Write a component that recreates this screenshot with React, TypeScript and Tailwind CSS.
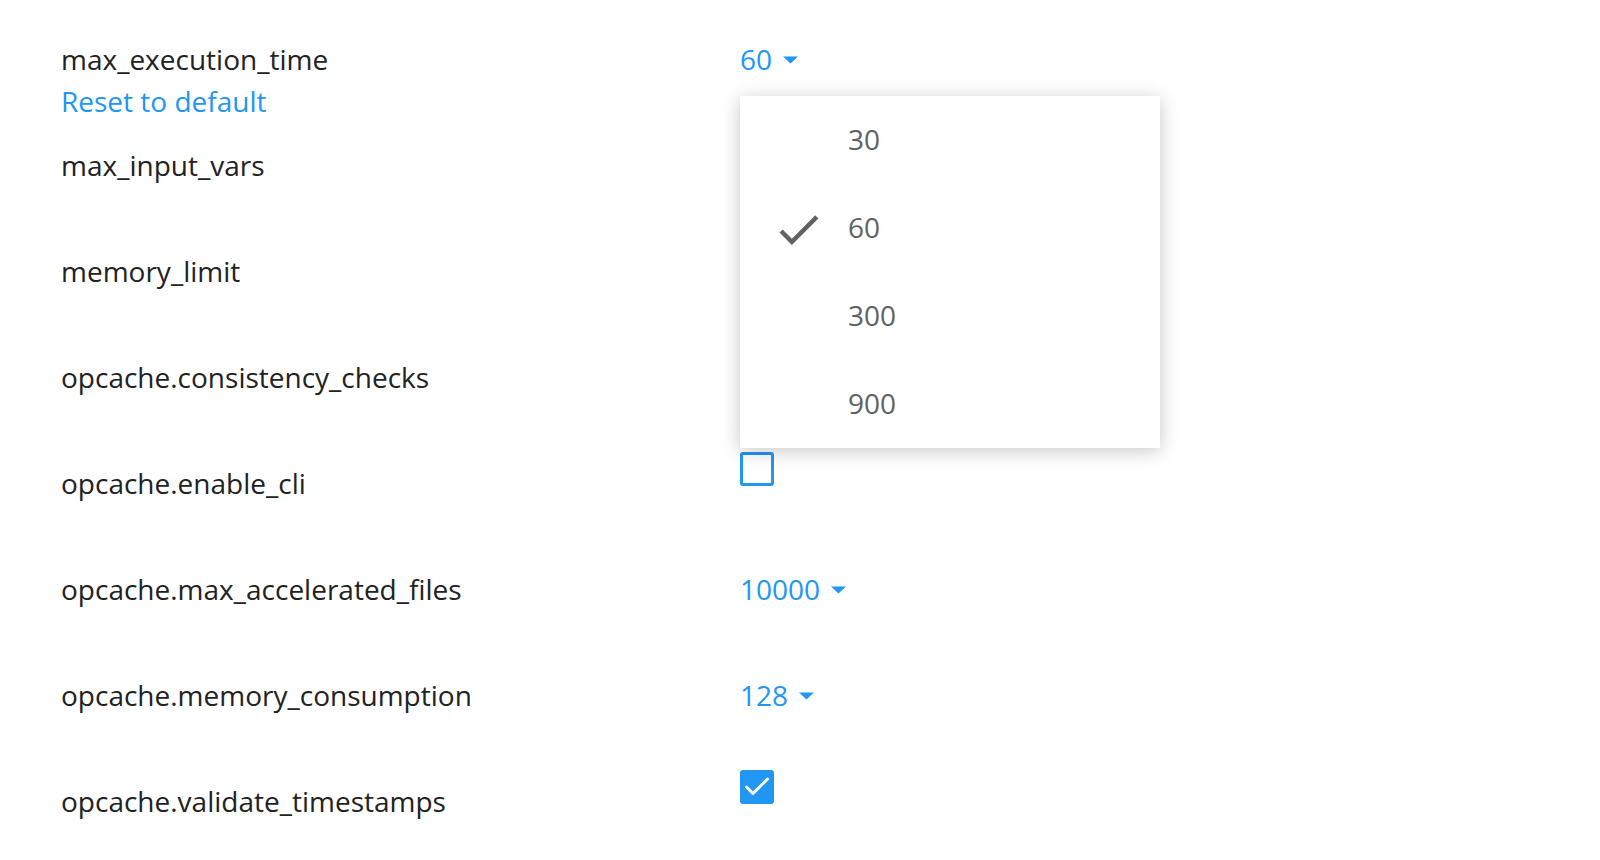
import { useState } from 'react';

type Setting = {
    name: string;
    kind: 'select' | 'checkbox' | 'empty';
    value?: string;
    checked?: boolean;
};

const settings: Setting[] = [
    { name: 'max_execution_time', kind: 'select', value: '60' },
    { name: 'max_input_vars', kind: 'empty' },
    { name: 'memory_limit', kind: 'empty' },
    { name: 'opcache.consistency_checks', kind: 'empty' },
    { name: 'opcache.enable_cli', kind: 'checkbox', checked: false },
    { name: 'opcache.max_accelerated_files', kind: 'select', value: '10000' },
    { name: 'opcache.memory_consumption', kind: 'select', value: '128' },
    { name: 'opcache.validate_timestamps', kind: 'checkbox', checked: true },
];

const options = ['30', '60', '300', '900'];

function Caret() {
    return (
        <svg width="15" height="8" viewBox="0 0 15 8" className="ml-[11px] mt-[2px]">
            <path d="M0 0.5 L15 0.5 L7.5 7.5 Z" fill="#2196f3" />
        </svg>
    );
}

function Checkbox({ checked }: { checked: boolean }) {
    if (checked) {
        return (
            <div className="w-[34px] h-[34px] rounded-[3px] bg-[#2196f3]">
                <svg width="34" height="34" viewBox="0 0 34 34">
                    <path d="M6.5 17 L13 23.5 L27.5 9" fill="none" stroke="#fff" strokeWidth="3" strokeLinecap="round" strokeLinejoin="round" />
                </svg>
            </div>
        );
    }
    return <div className="w-[34px] h-[34px] rounded-[3px] border-[3px] border-[#2196f3] bg-white" />;
}

function Menu({ selected }: { selected: string }) {
    return (
        <div className="absolute left-0 top-[68px] w-[420px] bg-white shadow-[0_3px_18px_rgba(0,0,0,0.22)] z-10">
            {options.map((opt) => (
                <div key={opt} className="relative h-[88px] flex items-center pl-[108px] pb-[2px] text-[#616161]">
                    {opt === selected && (
                        <svg width="53" height="53" viewBox="0 0 24 24" className="absolute left-[32px] top-[19px]">
                            <path d="M9 16.17L4.83 12l-1.42 1.41L9 19 21 7l-1.41-1.41z" fill="#616161" />
                        </svg>
                    )}
                    {opt}
                </div>
            ))}
        </div>
    );
}

export default function App() {
    const [open] = useState(true);

    return (
        <div className="min-h-screen bg-white pt-[28px] px-[61px] font-['Open_Sans',sans-serif] text-[28px] leading-[42px]">
            {settings.map((s, i) => (
                <div key={s.name} className="grid grid-cols-[679px_1fr] h-[106px]">
                    {/* label + reset */}
                    <div className="pt-[10px] text-[#222]">
                        <div>{s.name}</div>
                        {i === 0 && <a className="text-[#2196f3] cursor-pointer">Reset to default</a>}
                    </div>

                    {/* value */}
                    <div className="relative">
                        {s.kind === 'select' && (
                            <div className="pt-[10px] flex items-center text-[#2196f3] cursor-pointer">
                                <span>{s.value}</span>
                                <Caret />
                            </div>
                        )}
                        {s.kind === 'checkbox' && <Checkbox checked={!!s.checked} />}
                        {i === 0 && open && <Menu selected={s.value!} />}
                    </div>
                </div>
            ))}
        </div>
    );
}
